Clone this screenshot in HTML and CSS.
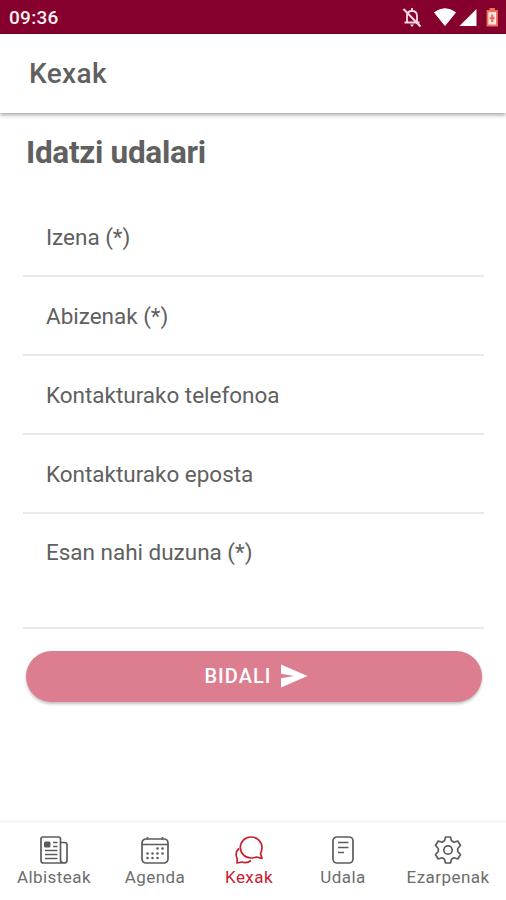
FILE: index.html
```html
<!DOCTYPE html>
<html lang="eu">
<head>
<meta charset="utf-8">
<title>Kexak</title>
<link rel="stylesheet" href="styles.css">
</head>
<body>
<div class="status">
  <span class="clock">09:36</span>
  <svg class="status-icons" width="100" height="24" viewBox="0 0 100 24">
    <g fill="none" stroke="#f6dce4" stroke-width="1.8"><path d="M7 17V11Q7 6 12 6T17 11V17M4.500 17.500H19.500M12 3V6"/><path d="M3.500 4L20.500 21.500" stroke-width="2"/></g>
    <path d="M10 19.500H14L12 22Z" fill="#f6dce4"/>
    <path d="M34.500 7.500Q45 0 55.500 7.500L45 20.500Z" fill="#fff" stroke="#fff" stroke-linejoin="round"/>
    <path d="M59.500 21L76.500 4V21Z" fill="#fff"/>
    <path d="M87.500 6H97V20.500H87.500ZM89.500 4H95" fill="#fce8df" stroke="#ef6f5c" stroke-width="1.800"/>
    <path d="M92.200 9.500V17M89.700 13.200H94.700" stroke="#ef6f5c" stroke-width="2.200"/>
  </svg>
</div>
<header class="toolbar">Kexak</header>
<main class="content">
  <h1>Idatzi udalari</h1>
  <form class="form">
    <label class="field">Izena (*)</label>
    <label class="field">Abizenak (*)</label>
    <label class="field">Kontakturako telefonoa</label>
    <label class="field">Kontakturako eposta</label>
    <label class="field message">Esan nahi duzuna (*)</label>
    <button class="send" type="button"><span>BIDALI</span>
      <svg width="28" height="24" viewBox="0 0 28 24"><path d="M1 .5L27.500 12L1 23.500V14.300L14 12L1 9.700Z" fill="#fff"/></svg>
    </button>
  </form>
</main>
<nav class="tabs">
  <a class="tab"><svg viewBox="0 0 28 28"><path d="M20.500 24.500V3Q20.500 1 18.500 1H3Q1 1 1 3V24.500Q1 27 3.500 27H24.500M20.500 6.500H24.500Q27 6.500 27 9V24.500Q27 27 24 27T20.500 24.500"/><path d="M13 6.500H17.500M13 10.500H17.500M5 14.500H17.500M5 18.500H17.500M5 22.500H17.500"/><rect x="4" y="5.500" width="6.500" height="6" rx="1.500" class="solid"/></svg><span>Albisteak</span></a>
  <a class="tab"><svg viewBox="0 0 28 28"><rect x="1" y="3" width="26" height="24" rx="4"/><path d="M1 8.500H27M6.500 1V3.500M21.500 1V3.500"/><path class="dots" d="M16.500 12.500h.01M21.500 12.500h.01M6.500 17.500h.01M11.500 17.500h.01M16.500 17.500h.01M21.500 17.500h.01M6.500 22h.01M11.500 22h.01M16.500 22h.01"/></svg><span>Agenda</span></a>
  <a class="tab active"><svg viewBox="0 0 28 28"><path d="M16 1C10 1 5.300 5.700 5.300 11.500S10 22 16 22Q19 22 21.500 21L27 22.300L25.500 17.500Q27 15 27 11.500C27 5.700 22 1 16 1Z"/><path d="M4 12.500Q.5 15.500 1.300 20Q1.500 21.500 2.300 22.500L2 27L7 26Q11.500 28 16 24.500"/></svg><span>Kexak</span></a>
  <a class="tab"><svg viewBox="0 0 28 28"><rect x="4" y="1" width="20" height="26" rx="4"/><path d="M9 6.500H19.500M9 11.500H19.500M9 16.500H15"/></svg><span>Udala</span></a>
  <a class="tab"><svg viewBox="0 0 28 28"><circle cx="14" cy="14" r="4.200"/><path d="M11.500 1H16.500L17.500 4.800L20 6.200L23.800 5L26.500 9.500L23.700 12.500V15.500L26.500 18.500L23.800 23L20 21.800L17.500 23.200L16.500 27H11.500L10.500 23.200L8 21.800L4.200 23L1.500 18.500L4.300 15.500V12.500L1.500 9.500L4.200 5L8 6.200L10.500 4.800Z"/></svg><span>Ezarpenak</span></a>
</nav>
</body>
</html>
```

FILE: styles.css
```css
* { box-sizing: border-box; }
body {
  margin: 0;
  height: 900px;
  display: flex;
  flex-direction: column;
  background: #fff;
  color: #606060;
  font-family: Roboto, sans-serif;
  overflow: hidden;
}
.status {
  height: 34px;
  flex: none;
  display: flex;
  justify-content: space-between;
  align-items: center;
  padding: 1px 6px 0 9px;
  background: #85002c;
  border-bottom: 1px solid #75001f;
}
.clock { padding-top: 1px; color: #fff0f3; font-size: 19px; font-weight: 500; letter-spacing: .3px; }
.status-icons { display: block; }
.toolbar {
  height: 79px;
  flex: none;
  padding-left: 29px;
  font-size: 28px;
  font-weight: 500;
  line-height: 80px;
  letter-spacing: .35px;
  box-shadow: 0 2px 4px rgba(0, 0, 0, .35);
}
.content { flex: 1; padding: 21px 22px 0 23px; }
h1 {
  margin: 0 0 26px 3px;
  font-size: 31.5px;
  line-height: 38px;
  font-weight: 700;
  letter-spacing: -.3px;
}
.form { display: flex; flex-direction: column; }
.field {
  height: 79px;
  padding: 25px 0 0 23px;
  border-bottom: 2px solid #e9e9e9;
  font-size: 22.5px;
  line-height: 28px;
  letter-spacing: -.02px;
}
.message { height: 115px; padding-top: 24px; }
.send {
  display: flex;
  align-items: center;
  justify-content: center;
  gap: 8px;
  height: 51px;
  margin: 22px 2px 0 3px;
  padding: 0 0 2px 4px;
  border: 0;
  border-radius: 26px;
  background: #dd7e90;
  color: #fff;
  font: 500 20px/24px Roboto, sans-serif;
  letter-spacing: 1.05px;
  box-shadow: 0 2px 3px rgba(0, 0, 0, .25);
}
.tabs {
  height: 80px;
  flex: none;
  display: grid;
  grid-template-columns: 108px 94px 94px 94px 116px;
  border-top: 3px solid #f7f7f7;
}
.tab {
  display: flex;
  flex-direction: column;
  align-items: center;
  padding-top: 13px;
  font-size: 17px;
  line-height: 22px;
  letter-spacing: .45px;
  color: #6d6d6d;
}
.tab span { margin-top: 2px; }
.tab svg {
  width: 28px;
  height: 28px;
  fill: none;
  stroke: #5c5c5c;
  stroke-width: 1.7;
  stroke-linejoin: round;
}
.tab .solid { fill: #5c5c5c; stroke: none; }
.tab .dots { stroke-width: 2.6; stroke-linecap: round; }
.active { color: #c8202f; }
.active svg { stroke: #c8202f; }
```
